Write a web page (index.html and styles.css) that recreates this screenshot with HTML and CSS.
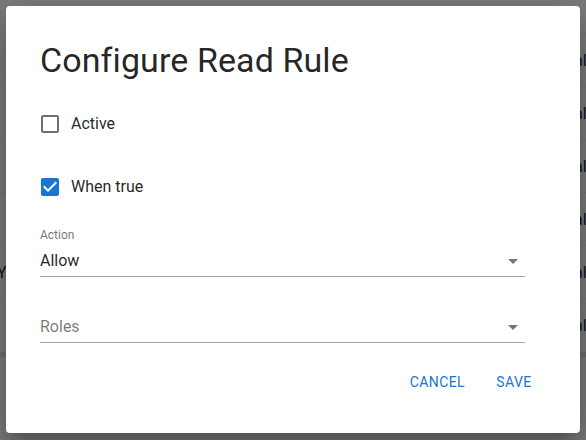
FILE: index.html
```html
<!DOCTYPE html>
<html>
<head>
<meta charset="utf-8">
<link rel="stylesheet" href="styles.css">
</head>
<body>
<div class="page">
  <div class="table">
    <div class="row head"></div>
    <div class="row"><span class="cell-left"></span><span class="cell-right">Value</span></div>
    <div class="row"><span class="cell-left"></span><span class="cell-right">Value</span></div>
    <div class="row"><span class="cell-left"></span><span class="cell-right">Value</span></div>
    <div class="row"><span class="cell-left"></span><span class="cell-right">Value</span></div>
    <div class="row"><span class="cell-left">Yes</span><span class="cell-right">Value</span></div>
    <div class="row last"><span class="cell-left"></span><span class="cell-right">Value</span></div>
    <div class="band"></div>
  </div>

  <div class="dialog">
    <h2 class="title">Configure Read Rule</h2>

    <label class="check-row first">
      <svg class="check-icon off" viewBox="0 0 24 24" width="24" height="24"><path d="M19 5v14H5V5h14m0-2H5c-1.1 0-2 .9-2 2v14c0 1.1.9 2 2 2h14c1.1 0 2-.9 2-2V5c0-1.1-.9-2-2-2z"/></svg>
      <span class="check-label">Active</span>
    </label>

    <label class="check-row second">
      <svg class="check-icon on" viewBox="0 0 24 24" width="24" height="24"><path d="M19 3H5c-1.11 0-2 .9-2 2v14c0 1.1.89 2 2 2h14c1.11 0 2-.9 2-2V5c0-1.1-.89-2-2-2zm-9 14l-5-5 1.41-1.41L10 14.17l7.59-7.59L19 8l-9 9z"/></svg>
      <span class="check-label">When true</span>
    </label>

    <div class="field action">
      <div class="field-label">Action</div>
      <div class="select">
        <span class="select-value">Allow</span>
        <svg class="arrow" viewBox="0 0 24 24" width="24" height="24"><path d="M7 10l5 5 5-5z"/></svg>
      </div>
    </div>

    <div class="field roles">
      <div class="select">
        <span class="select-placeholder">Roles</span>
        <svg class="arrow" viewBox="0 0 24 24" width="24" height="24"><path d="M7 10l5 5 5-5z"/></svg>
      </div>
    </div>

    <div class="actions">
      <button class="btn">Cancel</button>
      <button class="btn">Save</button>
    </div>
  </div>
</div>
</body>
</html>
```
FILE: styles.css
```css
* { box-sizing: border-box; }

html, body {
  margin: 0;
  padding: 0;
}

body {
  width: 586px;
  height: 440px;
  overflow: hidden;
  background: #7b7b7b;
  font-family: Roboto, "Noto Sans", "Liberation Sans", sans-serif;
}

.page {
  position: relative;
  width: 586px;
  height: 440px;
}

.table {
  display: flex;
  flex-direction: column;
}

.row {
  height: 53px;
  border-bottom: 1px solid #737373;
  display: flex;
  align-items: center;
  justify-content: space-between;
  font-size: 16px;
  color: #151515;
  white-space: nowrap;
  overflow: hidden;
}

.row.head {
  height: 34px;
}

.row.last {
  border-bottom: 0;
}

.cell-left {
  margin-left: -3px;
}

.cell-right {
  margin-right: -18px;
}

.band {
  height: 5px;
  background: #6e6e6e;
}

.dialog {
  position: absolute;
  left: 6px;
  top: 6px;
  width: 574px;
  height: 427px;
  background: #ffffff;
  border-radius: 4px;
  box-shadow: 0 11px 15px -7px rgba(0,0,0,0.2), 0 24px 38px 3px rgba(0,0,0,0.14), 0 9px 46px 8px rgba(0,0,0,0.12);
  padding: 34px 34px 0 34px;
  display: flex;
  flex-direction: column;
}

.title {
  margin: 0;
  font-size: 34px;
  font-weight: 400;
  line-height: 40px;
  color: rgba(0,0,0,0.87);
  letter-spacing: 0.1px;
}

.check-row {
  display: flex;
  align-items: center;
  height: 24px;
  gap: 9px;
  margin-left: -2px;
}

.check-row.first { margin-top: 32px; }
.check-row.second { margin-top: 39px; }

.check-icon {
  display: block;
  flex: none;
}

.check-icon.off { fill: rgba(0,0,0,0.56); }
.check-icon.on { fill: #1976d2; }

.check-label {
  font-size: 16px;
  line-height: 24px;
  color: rgba(0,0,0,0.87);
}

.field {
  width: 485px;
}

.field.action { margin-top: 29px; }
.field.roles { margin-top: 34px; }

.field-label {
  font-size: 12px;
  line-height: 14px;
  color: rgba(0,0,0,0.56);
  margin-bottom: 3px;
}

.select {
  position: relative;
  height: 32px;
  padding: 6px 0 6px 0;
  border-bottom: 1px solid rgba(0,0,0,0.36);
  font-size: 16px;
  line-height: 19px;
}

.select-value { color: rgba(0,0,0,0.87); }
.select-placeholder { color: rgba(0,0,0,0.54); }

.arrow {
  position: absolute;
  right: 0;
  top: 4px;
  fill: rgba(0,0,0,0.54);
}

.actions {
  display: flex;
  justify-content: flex-end;
  gap: 9px;
  margin-top: 21px;
}

.btn {
  font-family: Roboto, "Noto Sans", "Liberation Sans", sans-serif;
  font-size: 14px;
  font-weight: 400;
  line-height: 24.5px;
  letter-spacing: 0.4px;
  text-transform: uppercase;
  color: #1976d2;
  background: transparent;
  border: 0;
  padding: 6px 8px;
  min-width: 64px;
  border-radius: 4px;
}
```
